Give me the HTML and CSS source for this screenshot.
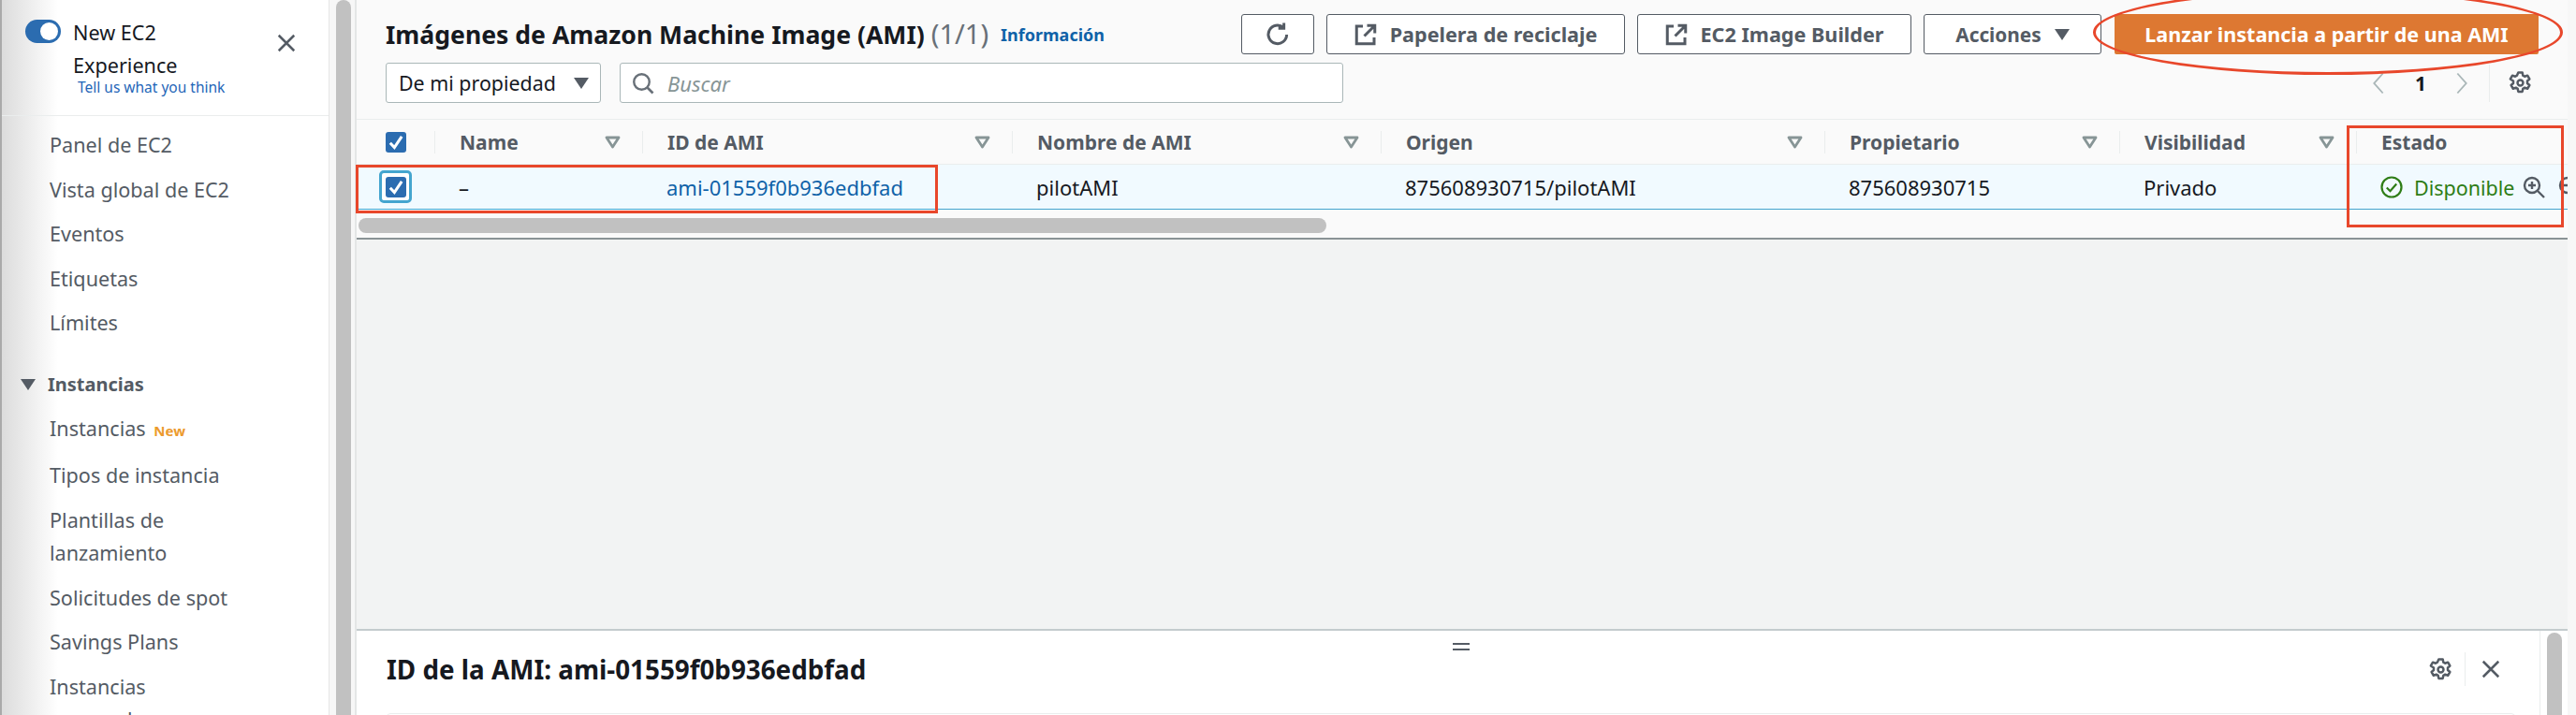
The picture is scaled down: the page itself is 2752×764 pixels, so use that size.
FILE: index.html
```html
<!DOCTYPE html>
<html lang="es">
<head>
<meta charset="utf-8" />
<title>Imágenes de Amazon Machine Image (AMI)</title>
<link rel="stylesheet" href="styles.css">
</head>
<body>
<svg class="defs" width="0" height="0">
    <symbol id="ico-gear" viewBox="0 0 16 16"><path d="M6.6 1h2.8l.4 2 1.2.7 1.9-.7 1.4 2.4-1.5 1.3v1.6l1.5 1.3-1.4 2.4-1.9-.7-1.2.7-.4 2H6.6l-.4-2-1.2-.7-1.9.7-1.4-2.4 1.5-1.3V6.7L1.2 5.4l1.4-2.4 1.9.7 1.2-.7z" fill="none" stroke="currentColor" stroke-width="1.6" stroke-linejoin="round"/><circle cx="8" cy="8" r="1.9" fill="none" stroke="currentColor" stroke-width="1.6"/></symbol>
    <symbol id="ico-close" viewBox="0 0 16 16"><path d="M2 2l12 12M14 2L2 14" fill="none" stroke="currentColor" stroke-width="1.8"/></symbol>
    <symbol id="ico-ext" viewBox="0 0 16 16"><path d="M9 1.5H14.5V7M14.5 1.5L7 9M6 2H1.5v12.5h12.5V10" fill="none" stroke="currentColor" stroke-width="2"/></symbol>
    <symbol id="ico-filter" viewBox="0 0 17 14" preserveAspectRatio="none"><path d="M2 2h13L8.500 12z" fill="none" stroke="currentColor" stroke-width="2.800" stroke-linejoin="round"/></symbol>
    <symbol id="ico-check" viewBox="0 0 16 16"><path d="M3.5 8.5L6.800 12L12.500 3.500" fill="none" stroke="currentColor" stroke-width="2.2"/></symbol>
</svg>

<div class="page">
    <div class="sidebar">
        <div class="side-top">
            <span class="toggle"></span>
            <div class="side-title">
                <div>New EC2</div>
                <div>Experience</div>
                <a class="side-fb">Tell us what you think</a>
            </div>
            <svg class="side-close"><use href="#ico-close"/></svg>
        </div>
        <ul class="nav nav-first">
            <li>Panel de EC2</li>
            <li>Vista global de EC2</li>
            <li>Eventos</li>
            <li>Etiquetas</li>
            <li>Límites</li>
        </ul>
        <div class="nav-head"><span class="caret"></span>Instancias</div>
        <ul class="nav">
            <li>Instancias <span class="new">New</span></li>
            <li>Tipos de instancia</li>
            <li>Plantillas de<br />lanzamiento</li>
            <li>Solicitudes de spot</li>
            <li>Savings Plans</li>
            <li>Instancias<br />reservadas <span class="new">New</span></li>
        </ul>
    </div>
    <div class="side-scroll"><div class="side-thumb"></div></div>

    <div class="main">
        <div class="tbar">
            <div class="tbar-row">
                <h1 class="title">Imágenes de Amazon Machine Image (AMI) <span class="count">(1/1)</span></h1>
                <a class="info">Información</a>
                <div class="actions">
                    <button class="btn btn-icon"><svg class="ico-refresh" viewBox="0 0 16 16"><path d="M13.500 8a5.600 5.600 0 1 1-2-4.400M11.800 0.800v3.400H8.400" fill="none" stroke="currentColor" stroke-width="1.700"/></svg></button>
                    <button class="btn btn-trash"><svg class="ico"><use href="#ico-ext"/></svg>Papelera de reciclaje</button>
                    <button class="btn btn-builder"><svg class="ico"><use href="#ico-ext"/></svg>EC2 Image Builder</button>
                    <button class="btn btn-menu">Acciones<span class="caret caret-btn"></span></button>
                    <button class="btn-primary">Lanzar instancia a partir de una AMI</button>
                </div>
            </div>
            <div class="tbar-row filter-row">
                <div class="select">De mi propiedad<span class="caret"></span></div>
                <div class="search">
                    <svg class="ico-search" viewBox="0 0 16 16"><circle cx="7" cy="7" r="5.500" fill="none" stroke="currentColor" stroke-width="1.600"/><path d="M11 11l4 4" stroke="currentColor" stroke-width="1.800"/></svg>
                    <span>Buscar</span>
                </div>
                <div class="pager">
                    <svg class="chev" viewBox="0 0 12 20"><path d="M10 1L2 10l8 9" fill="none" stroke="currentColor" stroke-width="1.600"/></svg>
                    <b>1</b>
                    <svg class="chev" viewBox="0 0 12 20"><path d="M2 1l8 9-8 9" fill="none" stroke="currentColor" stroke-width="1.600"/></svg>
                    <span class="pager-sep"><svg class="ico-gear"><use href="#ico-gear"/></svg></span>
                </div>
            </div>
        </div>

        <div class="table">
            <div class="row head">
                <div class="cell-chk"><span class="chk"><svg><use href="#ico-check"/></svg></span></div>
                <div class="th">Name<svg class="flt"><use href="#ico-filter"/></svg></div>
                <div class="th">ID de AMI<svg class="flt"><use href="#ico-filter"/></svg></div>
                <div class="th">Nombre de AMI<svg class="flt"><use href="#ico-filter"/></svg></div>
                <div class="th">Origen<svg class="flt"><use href="#ico-filter"/></svg></div>
                <div class="th">Propietario<svg class="flt"><use href="#ico-filter"/></svg></div>
                <div class="th">Visibilidad<svg class="flt"><use href="#ico-filter"/></svg></div>
                <div class="th">Estado<svg class="flt"><use href="#ico-filter"/></svg></div>
            </div>
            <div class="row sel">
                <div class="cell-chk"><span class="chk-ring"><span class="chk"><svg><use href="#ico-check"/></svg></span></span></div>
                <div class="td">–</div>
                <div class="td"><a class="link">ami-01559f0b936edbfad</a></div>
                <div class="td">pilotAMI</div>
                <div class="td">875608930715/pilotAMI</div>
                <div class="td">875608930715</div>
                <div class="td">Privado</div>
                <div class="td status">
                    <svg class="ico-ok" viewBox="0 0 24 24"><circle cx="12" cy="12" r="10.500" fill="none" stroke="currentColor" stroke-width="2.200"/><path d="M6.800 12.500l3.700 3.700 6.700-7.700" fill="none" stroke="currentColor" stroke-width="2.200"/></svg>
                    <span>Disponible</span>
                    <svg class="ico-zoom" viewBox="0 0 24 24"><circle cx="10" cy="10" r="8" fill="none" stroke="currentColor" stroke-width="2.400"/><path d="M16 16l7 7M10 6v8M6 10h8" fill="none" stroke="currentColor" stroke-width="2.400"/></svg>
                    <svg class="ico-zoom" viewBox="0 0 24 24"><circle cx="10" cy="10" r="8" fill="none" stroke="currentColor" stroke-width="2.400"/><path d="M16 16l7 7M6 10h8" fill="none" stroke="currentColor" stroke-width="2.400"/></svg>
                </div>
            </div>
            <div class="hscroll"><div class="hthumb"></div></div>
        </div>

        <div class="empty"></div>

        <div class="panel">
            <div class="panel-body">
                <div class="panel-head">
                    <h2 class="panel-title">ID de la AMI: ami-01559f0b936edbfad</h2>
                    <div class="panel-tools">
                        <svg class="ico-gear"><use href="#ico-gear"/></svg>
                        <span class="panel-sep"><svg class="panel-close"><use href="#ico-close"/></svg></span>
                    </div>
                </div>
                <div class="panel-box"></div>
            </div>
            <div class="panel-scroll"><div class="panel-thumb"></div></div>
            <div class="grip"></div>
        </div>
    </div>

    <div class="mark mark-oval"></div>
    <div class="mark mark-row"></div>
    <div class="mark mark-state"></div>
</div>
</body>
</html>
```

FILE: styles.css
```css
*{ padding:0; margin:0; box-sizing:border-box; list-style:none; }
html,body{ width:2752px; height:764px; overflow:hidden; background:#f7f7f7; }
body{ font-family:"Noto Sans","Liberation Sans",sans-serif; color:#16191f; font-size:22px; }
.defs{ position:absolute; }

.page{ position:relative; display:flex; width:2752px; height:764px; overflow:hidden; }

/* sidebar */
.sidebar{
  width:352px; height:764px; flex:none; overflow:hidden; background:linear-gradient(90deg,#dcdcdc 0,#fff 60px);
  border-left:2px solid #aaa; border-right:1px solid #e6e6e6;
}
.side-top{ display:flex; height:124px; border-bottom:1px solid #eaeded; padding:17px 0 0 25px; }
.toggle{ position:relative; flex:none; width:38px; height:25px; margin-top:4px; border-radius:13px; background:#2b6cb0; }
.toggle::after{ content:""; position:absolute; right:3px; top:3px; width:19px; height:19px; border-radius:50%; background:#fff; }
.side-title{ width:222px; padding-left:13px; font-size:21.600px; line-height:35px; color:#16191f; }
.side-fb{ display:block; margin:-4px 0 0 5px; font-size:15.500px; line-height:20px; color:#1f66b8; }
.side-close{ width:22px; height:22px; margin-top:18px; margin-left:8px; color:#545b64; }

.nav-first{ padding-top:7px; }
.nav li{ padding:6px 0 6px 51px; line-height:35.500px; color:#545b64; font-size:21.600px; white-space:nowrap; }
.nav li .new{ margin-left:3px; font-size:15px; font-weight:700; color:#ec9a2d; }
.nav-head{ display:flex; align-items:center; height:46px; margin-top:19px; padding-left:20px; font-size:20px; font-weight:700; color:#545b64; }
.caret{ display:inline-block; width:0; height:0; border-left:8px solid transparent; border-right:8px solid transparent; border-top:12px solid #545b64; }
.nav-head .caret{ margin-right:13px; }

.side-scroll{ width:29px; height:764px; flex:none; background:#f7f7f7; border-right:2px solid #e4e6e6; padding-left:7px; }
.side-thumb{ width:16px; height:800px; border-radius:8px; background:#c1c1c1; }

/* main */
.main{ position:relative; display:flex; flex-direction:column; width:2362px; height:764px; flex:none; background:#fafafa; overflow:hidden; }
.tbar{ height:127px; padding:15px 0 0 31px; }
.tbar-row{ display:flex; align-items:center; height:43px; }
.title{ font-size:26.600px; line-height:43px; font-weight:700; white-space:nowrap; }
.count{ font-size:29px; font-weight:400; color:#687078; }
.info{ margin-left:13px; font-size:18px; font-weight:700; color:#0f62a8; }
.actions{ display:flex; gap:13px; margin-left:auto; margin-right:31px; }
.btn{
  display:flex; align-items:center; justify-content:center; height:43px; border:1px solid #545b64; border-radius:3px;
  background:#fff; color:#545b64; font-family:inherit; font-size:21.600px; font-weight:700; white-space:nowrap;
}
.btn-icon{ width:78px; }
.btn-trash{ width:319px; }
.btn-builder{ width:293px; }
.btn-menu{ width:190px; font-size:20.800px; }
.ico-refresh{ width:28px; height:28px; }
.ico{ width:24px; height:24px; margin-right:14px; }
.caret-btn{ margin-left:14px; }
.btn-primary{
  height:43px; width:453px; border:0; border-radius:2px; background:#dd7832; color:#fff; margin-left:1px;
  font-family:inherit; font-size:21.500px; font-weight:700; white-space:nowrap;
}
.filter-row{ margin-top:9px; }
.select{ display:flex; align-items:center; justify-content:space-between; width:230px; height:43px; padding:0 12px 0 13px; background:#fff; border:1px solid #aab7b8; border-radius:3px; font-size:21.400px; }
.search{ display:flex; align-items:center; width:773px; height:43px; margin-left:20px; padding-left:12px; background:#fff; border:1px solid #aab7b8; border-radius:3px; color:#879596; font-style:italic; }
.ico-search{ width:24px; height:24px; margin-right:14px; color:#687078; }
.pager{ display:flex; align-items:center; margin-left:auto; margin-right:38px; }
.chev{ width:14px; height:24px; color:#aab7b8; }
.pager b{ margin:0 31px 0 32px; font-weight:700; font-size:21px; }
.pager-sep{ display:flex; align-items:center; height:40px; margin-left:22px; padding-left:20px; border-left:1px solid #eaeded; }
.ico-gear{ width:25px; height:25px; color:#545b64; }

/* table */
.row{ display:grid; grid-template-columns:83px 222px 395px 394px 474px 315px 253px 300px; align-items:center; width:2436px; }
.head{ height:49px; border-top:1px solid #eaeded; border-bottom:1px solid #eaeded; }
.sel{ height:48px; background:#f1faff; border-bottom:1px solid #44a5cf; }
.cell-chk{ display:flex; justify-content:center; }
.chk{ display:flex; width:22px; height:22px; border-radius:3px; background:#2b6cb0; color:#fff; }
.chk svg{ width:22px; height:22px; }
.chk-ring{ display:flex; align-items:center; justify-content:center; width:35px; height:35px; border:3px solid #44a5cf; border-radius:5px; background:#fff; }
.th{ display:flex; align-items:center; justify-content:space-between; height:24px; padding:0 23px 0 26px; border-left:1px solid #eaeded; font-size:21px; font-weight:700; color:#545b64; }
.flt{ width:17px; height:14px; color:#879596; }
.td{ padding-left:26px; padding-top:1px; white-space:nowrap; }
.link{ color:#0f62a8; }
.status{ display:flex; align-items:center; font-size:21.500px; color:#2e7d16; }
.ico-ok{ width:24px; height:24px; margin-right:12px; }
.ico-zoom{ flex:none; width:24px; height:24px; margin-left:8px; color:#545b64; }
.ico-zoom + .ico-zoom{ margin-left:14px; }
.hscroll{ height:32px; padding:9px 0 0 2px; border-bottom:2px solid #8a9396; }
.hthumb{ width:1034px; height:16px; border-radius:8px; background:#c1c1c1; }

.empty{ flex:1; background:#f2f3f3; }

/* panel */
.panel{ position:relative; display:flex; height:92px; background:#fff; border-top:2px solid #c4cbcd; }
.panel-body{ flex:1; padding:0 26px 0 32px; }
.panel-head{ display:flex; align-items:center; justify-content:space-between; height:88px; }
.panel-title{ font-size:27.800px; font-weight:700; margin-top:-6px; }
.panel-tools{ display:flex; align-items:center; margin-right:15px; margin-top:-6px; }
.panel-sep{ display:flex; align-items:center; height:36px; margin-left:13px; padding-left:16px; border-left:1px solid #eaeded; }
.panel-close{ width:22px; height:22px; color:#545b64; }
.panel-box{ height:10px; border:1px solid #eaeded; border-radius:4px 4px 0 0; }
.panel-scroll{ width:30px; padding:2px 0 0 7px; background:#fff; border-left:1px solid #eaeded; }
.panel-thumb{ width:16px; height:90px; border-radius:8px 8px 0 0; background:#c1c1c1; }
.grip{ position:absolute; left:1171px; top:13px; width:18px; height:8px; border-top:2px solid #545b64; border-bottom:2px solid #545b64; }

/* annotations painted on the screenshot */
.mark{ position:absolute; border:3px solid #e8472b; }
.mark-oval{ left:2236px; top:-11px; width:502px; height:91px; border-radius:50%; }
.mark-row{ left:380px; top:176px; width:622px; height:52px; }
.mark-state{ left:2507px; top:134px; width:232px; height:109px; }
```
